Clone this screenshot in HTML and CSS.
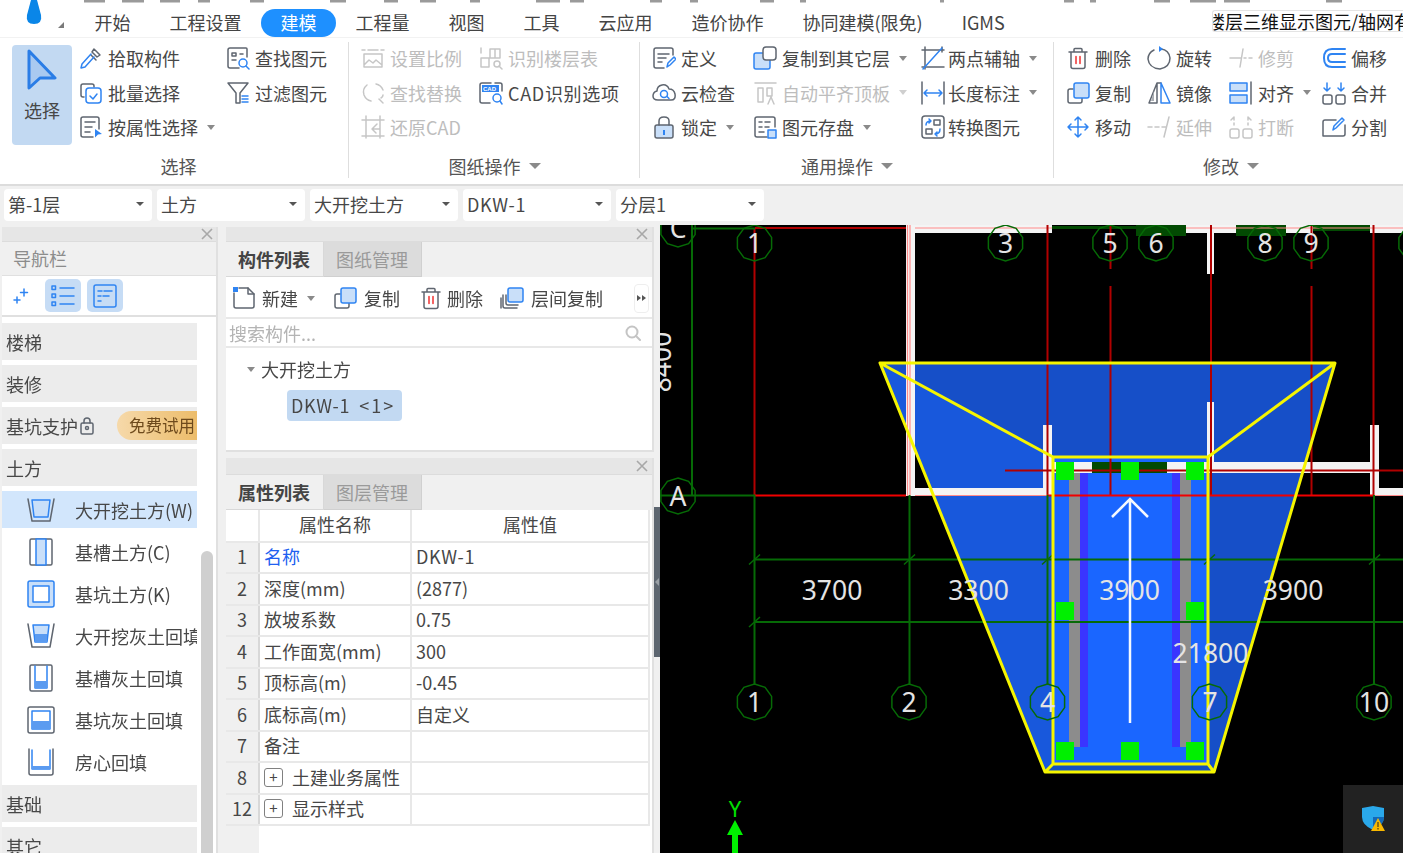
FILE: index.html
```html
<!DOCTYPE html>
<html lang="zh-CN">
<head>
<meta charset="utf-8">
<title>建模</title>
<link rel="stylesheet" href="styles.css">
</head>
<body>
<svg class="defs" width="0" height="0">
  <defs>
    <symbol id="trash" viewBox="0 0 24 24"><path class="g" d="M3 6h18M8 6V3.500q0-1 1-1h6q1 0 1 1V6M5 6v14.500q0 2 2 2h10q2 0 2-2V6"/><path class="r" d="M10 10.500v7M14 10.500v7"/></symbol>
    <symbol id="copy" viewBox="0 0 24 24"><path class="g" d="M7 8H4q-2 0-2 2v10q0 2 2 2h10q2 0 2-2v-3"/><rect class="bf" x="8" y="2" width="15" height="15" rx="2"/></symbol>
    <symbol id="oct" viewBox="-19 -19 38 38"><polygon class="octa" points="0,-18 10.600,-14.600 17.100,-5.600 17.100,5.600 10.600,14.600 0,18 -10.600,14.600 -17.100,5.600 -17.100,-5.600 -10.600,-14.600"/></symbol>
  </defs>
</svg>
<div class="app">
  <header class="menubar">
    <svg class="frags" width="1403" height="3" viewBox="0 0 1403 3"><path class="fragline" d="M84 1h21M122 1h22M160 1h20M198 1h12M250 1h14M330 1h16M384 1h14M420 1h16M470 1h10M536 1h24M570 1h14M650 1h12M690 1h8M760 1h14M800 1h6M940 1h4M1064 1h10M1090 1h6M1154 1h16M1190 1h26M1224 1h26M1326 1h16"/></svg>
    <svg class="brand" width="75" height="37" viewBox="0 0 75 37"><path class="drop" d="M31 0h6l4 15q1.500 9-7 9t-7-9z"/><path class="corner" d="M64 22v6h-6z"/></svg>
    <nav class="tabs">
      <span class="tab">开始</span><span class="tab">工程设置</span><span class="tab tab-on">建模</span><span class="tab">工程量</span><span class="tab">视图</span><span class="tab">工具</span><span class="tab">云应用</span><span class="tab">造价协作</span><span class="tab">协同建模(限免)</span><span class="tab">IGMS</span>
    </nav>
    <div class="combo3d">楼层三维显示图元/轴网有效</div>
  </header>

  <section class="ribbon">
    <div class="group g1">
      <div class="group-body">
        <div class="bigbtn">
          <svg width="32" height="42" viewBox="0 0 32 42"><path class="arrow" d="M3 3L29 30H14L3 40Z"/></svg>
          <span>选择</span>
        </div>
        <div class="grid cols1">
          <div class="rb"><svg class="ic" viewBox="0 0 24 24"><path class="g" d="M12 9l5 5M15 3l6 6-3 2-5-5z"/><path class="bs" d="M12 8L3 18l-1 4 4-1 9-10" /></svg><span>拾取构件</span></div>
          <div class="rb"><svg class="ic" viewBox="0 0 24 24"><path class="g" d="M5 16H4q-2 0-2-2V5q0-2 2-2h9q2 0 2 2v1"/><rect class="bs" x="7" y="7" width="15" height="15" rx="3"/><path class="bs" d="M11 15l3 3 4-5"/></svg><span>批量选择</span></div>
          <div class="rb"><svg class="ic" viewBox="0 0 24 24"><path class="g" d="M20 14V4q0-2-2-2H4Q2 2 2 4v16q0 2 2 2h10M6 7h10M6 12h7M6 17h5"/><path class="bsolid" d="M16 14l7 5-4 .5-3 3z"/></svg><span>按属性选择</span><i class="caret"></i></div>
          <div class="rb"><svg class="ic" viewBox="0 0 24 24"><path class="g" d="M21 11V3q0-1-1-1H4Q2 2 2 4v16q0 2 2 2h9M6 7h4v3H6zM6 14h4M14 8h3"/><circle class="bs" cx="17" cy="17" r="4"/><path class="bs" d="M20 20l3 3"/></svg><span>查找图元</span></div>
          <div class="rb"><svg class="ic" viewBox="0 0 24 24"><path class="g" d="M2 2h20l-8 10v10h-4V12z"/><path class="bs" d="M16 15h6M16 18h6M16 21h6"/></svg><span>过滤图元</span></div>
        </div>
      </div>
      <div class="group-label lbl-g1">选择</div>
    </div>

    <div class="group g2">
      <div class="group-body">
        <div class="grid cols2">
          <div class="rb off"><svg class="ic" viewBox="0 0 24 24"><path class="d" d="M1 4h3M20 4h3M7 4h10M3 8h18v13H3zM3 19l5-5 4 3 3-3 6 5"/></svg><span>设置比例</span></div>
          <div class="rb off"><svg class="ic" viewBox="0 0 24 24"><path class="d" d="M6 4Q1 8 3 14q2 5 7 6M15 3q5 1 7 6M22 14q0 2-2 3"/><path class="d" d="M18 18l4 4"/></svg><span>查找替换</span></div>
          <div class="rb off"><svg class="ic" viewBox="0 0 24 24"><path class="d" d="M1 5h22M1 21h22M5 1v22M19 1v22M16 9l-5 5h7M11 14l4 4"/></svg><span>还原CAD</span></div>
          <div class="rb off"><svg class="ic" viewBox="0 0 24 24"><path class="d" d="M2 2v5M2 12h8v9H2zM11 3h10v9H11zM16 3v9"/><circle class="d" cx="18" cy="18" r="3"/><path class="d" d="M20 20l3 3"/></svg><span>识别楼层表</span></div>
          <div class="rb"><svg class="ic" viewBox="0 0 24 24"><path class="g" d="M16 2h5q2 0 2 2v6M11 22H3q-2 0-2-2V4q0-2 2-2h9"/><path class="bsolid" d="M3 4h17v7H3z"/><text class="cadtxt" x="4" y="10">CAD</text><circle class="bs" cx="18" cy="17" r="4"/><path class="bs" d="M21 20l2 3"/></svg><span class="lat">CAD识别选项</span></div>
        </div>
      </div>
      <div class="group-label">图纸操作<i class="caret caret-lg"></i></div>
    </div>

    <div class="group g3">
      <div class="group-body">
        <div class="grid cols3">
          <div class="rb"><svg class="ic" viewBox="0 0 24 24"><path class="g" d="M21 9V4q0-2-2-2H4Q2 2 2 4v16q0 2 2 2h8M6 8h11M6 12h8M6 16h4"/><path class="bs" d="M15 21l1-4 6-6 2 2-6 6z"/></svg><span>定义</span></div>
          <div class="rb"><svg class="ic" viewBox="0 0 24 24"><rect class="bf" x="1" y="7" width="16" height="16" rx="2"/><rect class="gw" x="10" y="1" width="13" height="13" rx="3"/></svg><span>复制到其它层</span><i class="caret"></i></div>
          <div class="rb"><svg class="ic" viewBox="0 0 24 24"><path class="g" d="M4 1v22M1 4h22M21 1v5M1 21h22"/><path class="bs" d="M2 23L21 2"/></svg><span>两点辅轴</span><i class="caret"></i></div>
          <div class="rb"><svg class="ic" viewBox="0 0 24 24"><path class="g" d="M6 19h13q5 0 4-6-1-5-6-5-2-5-7-4-5 1-5 6-4 1-4 5 0 4 5 4"/><circle class="bs" cx="12" cy="13" r="3.500"/><path class="bs" d="M15 15.500l2 2"/></svg><span>云检查</span></div>
          <div class="rb off"><svg class="ic" viewBox="0 0 24 24"><path class="d" d="M2 2h21M5 7h5v14H5zM14 7h5v8h-5zM15 23l3-7 3 7"/></svg><span>自动平齐顶板</span><i class="caret caret-off"></i></div>
          <div class="rb"><svg class="ic" viewBox="0 0 24 24"><path class="g" d="M1 1v22M23 1v22"/><path class="bs" d="M3 12h18M6 9l-3 3 3 3M18 9l3 3-3 3"/></svg><span>长度标注</span><i class="caret"></i></div>
          <div class="rb"><svg class="ic" viewBox="0 0 24 24"><rect class="bfg" x="3" y="10" width="18" height="13" rx="2"/><path class="g" d="M7 10V6q0-4 5-4t5 4v4"/><path class="bsolid" d="M11 15h2v5h-2z"/></svg><span>锁定</span><i class="caret"></i></div>
          <div class="rb"><svg class="ic" viewBox="0 0 24 24"><path class="g" d="M22 12V4q0-2-2-2H4Q2 2 2 4v16q0 2 2 2h10M6 7h3M12 7h5M6 12h3M12 12h4M6 17h5"/><rect class="bf" x="15" y="15" width="8" height="8"/></svg><span>图元存盘</span><i class="caret"></i></div>
          <div class="rb"><svg class="ic" viewBox="0 0 24 24"><rect class="g" x="1" y="1" width="22" height="22" rx="3"/><rect class="g" x="13" y="5" width="6" height="5"/><rect class="g" x="5" y="14" width="6" height="5"/><path class="bs" d="M5 10q0-4 5-4M8 4l2 2-2 2M19 14q0 5-5 5M16 21l-2-2 2-2"/></svg><span>转换图元</span></div>
        </div>
      </div>
      <div class="group-label">通用操作<i class="caret caret-lg"></i></div>
    </div>

    <div class="group g4">
      <div class="group-body">
        <div class="grid cols4">
          <div class="rb"><svg class="ic"><use href="#trash"/></svg><span>删除</span></div>
          <div class="rb"><svg class="ic" viewBox="0 0 24 24"><path class="g" d="M14 3q8 1 9 9 0 9-10 11Q2 22 1 13q0-6 6-9"/><path class="bsolid" d="M12 0l4 3-4 3z"/></svg><span>旋转</span></div>
          <div class="rb off"><svg class="ic" viewBox="0 0 24 24"><path class="d" d="M1 12h11M15 12h2M20 12h3M14 3l-3 18"/></svg><span>修剪</span></div>
          <div class="rb"><svg class="ic" viewBox="0 0 24 24"><path class="bs2" d="M23 3H10Q2 3 2 12t8 9h13M23 8H10q-4 0-4 4t4 4h13"/></svg><span>偏移</span></div>
          <div class="rb"><svg class="ic"><use href="#copy"/></svg><span>复制</span></div>
          <div class="rb"><svg class="ic" viewBox="0 0 24 24"><path class="g" d="M10 2v20H2zM10 2h4"/><path class="grayfill" d="M7 10v10H4z"/><path class="bs" d="M14 2l9 20h-9z"/></svg><span>镜像</span></div>
          <div class="rb"><svg class="ic" viewBox="0 0 24 24"><rect class="bf" x="1" y="2" width="17" height="8"/><rect class="bf" x="1" y="14" width="17" height="8"/><path class="g" d="M22 1v22"/></svg><span>对齐</span><i class="caret"></i></div>
          <div class="rb"><svg class="ic" viewBox="0 0 24 24"><rect class="g" x="1" y="14" width="9" height="9" rx="2"/><rect class="g" x="14" y="14" width="9" height="9" rx="2"/><path class="bs" d="M5 2v8M2 7l3 3 3-3M19 2v8M16 7l3 3 3-3"/></svg><span>合并</span></div>
          <div class="rb"><svg class="ic" viewBox="0 0 24 24"><path class="bs" d="M12 2v20M2 12h20M9 5l3-3 3 3M9 19l3 3 3-3M5 9l-3 3 3 3M19 9l3 3-3 3"/></svg><span>移动</span></div>
          <div class="rb off"><svg class="ic" viewBox="0 0 24 24"><path class="d" d="M1 12h4M8 12h4M15 12h4M22 2l-5 20"/></svg><span>延伸</span></div>
          <div class="rb off"><svg class="ic" viewBox="0 0 24 24"><rect class="d" x="1" y="14" width="9" height="9" rx="2"/><rect class="d" x="14" y="14" width="9" height="9" rx="2"/><path class="d" d="M5 2v3M5 8v2M19 2v3M19 8v2M2 5l3-3M22 5l-3-3"/></svg><span>打断</span></div>
          <div class="rb"><svg class="ic" viewBox="0 0 24 24"><path class="g" d="M14 5H3Q1 5 1 7v14h20q2 0 2-2v-9"/><path class="bs" d="M11 15l1-4 8-8 2 2-8 8z"/></svg><span>分割</span></div>
        </div>
      </div>
      <div class="group-label lbl-g4">修改<i class="caret caret-lg"></i></div>
    </div>
  </section>

  <section class="selbar">
    <div class="sel"><span>第-1层</span><i class="caret caret-dark"></i></div>
    <div class="sel"><span>土方</span><i class="caret caret-dark"></i></div>
    <div class="sel"><span>大开挖土方</span><i class="caret caret-dark"></i></div>
    <div class="sel"><span class="lat">DKW-1</span><i class="caret caret-dark"></i></div>
    <div class="sel"><span>分层1</span><i class="caret caret-dark"></i></div>
  </section>

  <main class="workspace">
    <aside class="nav">
      <div class="strip"><svg class="x" viewBox="0 0 12 12"><path d="M1 1l10 10M11 1L1 11"/></svg></div>
      <div class="nav-title">导航栏</div>
      <div class="nav-tools">
        <svg class="spark" width="16" height="16" viewBox="0 0 16 16"><path class="bs" d="M11 1v7M7.500 4.500h7M4 9v6M1 12h6"/></svg>
        <div class="toolbtn"><svg width="24" height="24" viewBox="0 0 24 24"><path class="bs" d="M9 4h14M9 12h14M9 20h14"/><rect class="bs" x="1" y="2" width="3.500" height="3.500"/><rect class="bs" x="1" y="10" width="3.500" height="3.500"/><rect class="bs" x="1" y="18" width="3.500" height="3.500"/></svg></div>
        <div class="toolbtn"><svg width="24" height="24" viewBox="0 0 24 24"><rect class="bs" x="1" y="1" width="22" height="22" rx="2"/><path class="bs" d="M5 7h4M11 7h8M5 12h3M10 12h6M5 17h3"/></svg></div>
      </div>
      <div class="nav-body">
        <div class="nav-list">
          <div class="cat"><span>楼梯</span></div>
          <div class="cat"><span>装修</span></div>
          <div class="cat"><span>基坑支护</span><svg class="lock" width="14" height="18" viewBox="0 0 14 18"><rect class="g" x="1" y="6" width="12" height="11" rx="1.500"/><path class="g" d="M4 6V4q0-3 3-3t3 3v2"/><circle class="g" cx="7" cy="11" r="1.500"/></svg><span class="badge">免费试用</span></div>
          <div class="cat"><span>土方</span></div>
          <div class="sub sub-on"><svg class="subic" viewBox="0 0 30 30"><path class="g" d="M2 4l4 22h18l4-22"/><path class="bf" d="M6 5h18l-2 17H8z"/></svg><span>大开挖土方(W)</span></div>
          <div class="sub"><svg class="subic" viewBox="0 0 30 30"><rect class="g" x="4" y="2" width="22" height="26" rx="1.500"/><path class="bf" d="M10 2h10v26H10z"/></svg><span>基槽土方(C)</span></div>
          <div class="sub"><svg class="subic" viewBox="0 0 30 30"><rect class="bf" x="2" y="2" width="26" height="26" rx="2"/><rect class="whb" x="7" y="7" width="16" height="16"/></svg><span>基坑土方(K)</span></div>
          <div class="sub"><svg class="subic" viewBox="0 0 30 30"><path class="g" d="M2 3l4 23h18l4-23"/><path class="bf" d="M7 4h16l-2 17H9z"/><path class="dots" d="M9 13h12v8H9z"/></svg><span>大开挖灰土回填</span></div>
          <div class="sub"><svg class="subic" viewBox="0 0 30 30"><rect class="g" x="4" y="2" width="22" height="26" rx="1.500"/><path class="bs" d="M9 3v22h12V3"/><path class="dots" d="M9 18h12v7H9z"/></svg><span>基槽灰土回填</span></div>
          <div class="sub"><svg class="subic" viewBox="0 0 30 30"><rect class="g" x="2" y="2" width="26" height="26" rx="2"/><rect class="bs" x="6" y="6" width="18" height="18"/><path class="dots" d="M6 16h18v8H6z"/></svg><span>基坑灰土回填</span></div>
          <div class="sub"><svg class="subic" viewBox="0 0 30 30"><path class="g" d="M3 2v24q0 2 2 2h20q2 0 2-2V2"/><path class="bs" d="M6 3v19h18V3"/><path class="dots" d="M6 19h18v3H6z"/></svg><span>房心回填</span></div>
          <div class="cat"><span>基础</span></div>
          <div class="cat"><span>其它</span></div>
        </div>
        <div class="nav-scroll"><div class="nav-thumb"></div></div>
      </div>
    </aside>

    <div class="mid">
      <section class="panel panel-list">
        <div class="strip"><svg class="x" viewBox="0 0 12 12"><path d="M1 1l10 10M11 1L1 11"/></svg></div>
        <div class="panel-tabs"><div class="ptab ptab-on">构件列表</div><div class="ptab">图纸管理</div></div>
        <div class="ptools">
          <div class="pt pt-new"><svg class="ic" viewBox="0 0 24 24"><path class="g" d="M2 7v13q0 2 2 2h16q2 0 2-2V8l-6-6H7"/><path class="g" d="M16 2v6h6"/><path class="bsolid" d="M1 1h5v5H1z"/></svg><span>新建</span><i class="caret"></i></div>
          <div class="pt pt-copy"><svg class="ic"><use href="#copy"/></svg><span>复制</span></div>
          <div class="pt pt-del"><svg class="ic"><use href="#trash"/></svg><span>删除</span></div>
          <div class="pt"><svg class="ic" viewBox="0 0 24 24"><path class="g" d="M3 9v11q0 2 2 2h12M1 12v10"/><path class="g" d="M6 9v8q0 2 2 2h10"/><rect class="bf" x="8" y="2" width="15" height="14" rx="2"/></svg><span>层间复制</span></div>
          <div class="more"><span class="tri"></span><span class="tri"></span></div>
        </div>
        <div class="search"><span>搜索构件...</span><svg width="16" height="16" viewBox="0 0 16 16"><circle class="sch" cx="7" cy="7" r="5.500"/><path class="sch" d="M11 11l4 4"/></svg></div>
        <div class="tree">
          <div class="tree-root"><i class="caret"></i><span>大开挖土方</span></div>
          <div class="chip"><span class="lat">DKW-1</span><span class="chip-n">&lt;1&gt;</span></div>
        </div>
      </section>

      <section class="panel panel-attr">
        <div class="strip"><svg class="x" viewBox="0 0 12 12"><path d="M1 1l10 10M11 1L1 11"/></svg></div>
        <div class="panel-tabs"><div class="ptab ptab-on">属性列表</div><div class="ptab">图层管理</div></div>
        <div class="attr-body">
          <table class="attr">
            <colgroup><col class="c0"><col class="c1"><col class="c2"></colgroup>
            <thead><tr><th class="hd0"></th><th>属性名称</th><th>属性值</th></tr></thead>
            <tbody>
              <tr><td class="no">1</td><td class="key">名称</td><td class="lat">DKW-1</td></tr>
              <tr><td class="no">2</td><td>深度(mm)</td><td>(2877)</td></tr>
              <tr><td class="no">3</td><td>放坡系数</td><td>0.75</td></tr>
              <tr><td class="no">4</td><td>工作面宽(mm)</td><td>300</td></tr>
              <tr><td class="no">5</td><td>顶标高(m)</td><td>-0.45</td></tr>
              <tr><td class="no">6</td><td>底标高(m)</td><td>自定义</td></tr>
              <tr><td class="no">7</td><td>备注</td><td></td></tr>
              <tr><td class="no">8</td><td><span class="plus">+</span>土建业务属性</td><td></td></tr>
              <tr><td class="no">12</td><td><span class="plus">+</span>显示样式</td><td></td></tr>
            </tbody>
          </table>
          <div class="attr-rest"></div>
        </div>
      </section>
    </div>

    <div class="splitter"><div class="split-thumb"><i class="split-arrow"></i></div></div>

    <div class="canvas">
      <svg class="draw" width="743" height="628" viewBox="660 225 743 628">
        <!-- blue pit -->
        <polygon class="bl1" points="880,363 1335,363 1208,457 1053,457"/>
        <polygon class="bl2" points="880,363 1053,457 1053,764 1045,772"/>
        <polygon class="bl3" points="1335,363 1208,457 1208,764 1214,772"/>
        <polygon class="bl4" points="1045,772 1053,764 1208,764 1214,772"/>
        <rect class="bl5" x="1053" y="457" width="155" height="307"/>
        <!-- walls -->
        <g class="wall">
          <rect x="906" y="225" width="9" height="271"/>
          <rect x="915" y="225" width="137" height="8"/>
          <rect x="915" y="488" width="137" height="8"/>
          <rect x="1043" y="425" width="9" height="71"/>
          <rect x="1186" y="225" width="50" height="8"/>
          <rect x="1207" y="225" width="7" height="49"/>
          <rect x="1286" y="225" width="27" height="8"/>
          <rect x="1370" y="225" width="33" height="8"/>
          <rect x="1207" y="402" width="7" height="71"/>
          <rect x="1207" y="462" width="163" height="11"/>
          <rect x="1370" y="425" width="9" height="71"/>
          <rect x="1379" y="488" width="24" height="8"/>
          <rect x="1054" y="462" width="38" height="11"/>
          <rect x="1167" y="462" width="41" height="11"/>
        </g>
        <path class="dkgr" d="M1092 462h75v11h-75zM1136 225h50v11h-50zM1236 225h50v11h-50zM1313 225h57v6h-57zM1052 226h84v3h-84z"/>
        <path class="pink" d="M907.500 225V496M910 225V496M915 228H1052M1186 228H1403M915 495.500H1047M1373 495.500H1403"/>
        <!-- columns -->
        <rect class="gy" x="1069" y="473" width="11" height="274"/>
        <rect class="ind" x="1080" y="473" width="8" height="274"/>
        <rect class="ind" x="1172" y="473" width="8" height="274"/>
        <rect class="gy" x="1180" y="473" width="11" height="274"/>
        <!-- red axes -->
        <path class="rd" d="M754.500 228V495M755 228H906M1047.500 225V495M1110.500 225V269M1110.500 286V495M1211 225V495M1311.500 225V269M1311.500 286V495M1373.500 225V495M1005 470.500H1403"/>
        <path class="rb-line" d="M755 495.500H906M1047 495.500H1374"/>
        <!-- grid -->
        <path class="gl" d="M692 225V496M660 495.500H755M692 228.500H755M754.500 495V684M909.500 495V684M1047.500 495V684M1374 495V684M754 559.500H1403M754 622H1403"/>
        <path class="tick" d="M749 564.500l11-10M904 564.500l11-10M1042 564.500l11-10M1204 564.500l11-10M1369 564.500l11-10M749 627l11-10"/>
        <!-- outline -->
        <path class="yl" d="M880 363H1335L1214 772H1045ZM880 363L1053 457M1335 363L1208 457M1045 772L1053 764M1214 772L1208 764M1053 457H1208V764H1053Z"/>
        <!-- handles -->
        <path class="hnd" d="M1056 462h18v18h-18zM1121 462h18v18h-18zM1186 462h18v18h-18zM1056 602h18v18h-18zM1186 602h18v18h-18zM1056 742h18v18h-18zM1121 742h18v18h-18zM1186 742h18v18h-18z"/>
        <!-- direction arrow -->
        <path class="wa" d="M1130 723V499M1112 517L1130 499L1148 517"/>
        <!-- bubbles -->
        <use href="#oct" x="659" y="210" width="38" height="38"/>
        <use href="#oct" x="735.500" y="224" width="38" height="38"/>
        <use href="#oct" x="986.500" y="224" width="38" height="38"/>
        <use href="#oct" x="1091" y="224" width="38" height="38"/>
        <use href="#oct" x="1137" y="224" width="38" height="38"/>
        <use href="#oct" x="1246" y="224" width="38" height="38"/>
        <use href="#oct" x="1292" y="224" width="38" height="38"/>
        <use href="#oct" x="1397" y="224" width="38" height="38"/>
        <use href="#oct" x="659" y="477" width="38" height="38"/>
        <use href="#oct" x="735.500" y="683" width="38" height="38"/>
        <use href="#oct" x="890" y="683" width="38" height="38"/>
        <use href="#oct" x="1028.500" y="683" width="38" height="38"/>
        <use href="#oct" x="1190.500" y="683" width="38" height="38"/>
        <use href="#oct" x="1355" y="683" width="38" height="38"/>
        <!-- labels -->
        <g class="lb">
          <text x="678" y="238">C</text><text x="754.500" y="253">1</text><text x="1005.500" y="253">3</text><text x="1110" y="253">5</text><text x="1156" y="253">6</text><text x="1265" y="253">8</text><text x="1311" y="253">9</text>
          <text x="678" y="506">A</text>
          <text x="754.500" y="712">1</text><text x="909" y="712">2</text><text x="1047.500" y="712">4</text><text x="1210" y="712">7</text><text x="1374" y="712">10</text>
          <text x="832" y="600">3700</text><text x="978.500" y="600">3300</text><text x="1129.500" y="600">3900</text><text x="1293" y="600">3900</text><text x="1210.500" y="663">21800</text>
          <text transform="translate(671 362) rotate(-90)" x="0" y="0">8400</text>
        </g>
        <text class="ya" x="735" y="817">Y</text>
        <path class="yarrow" d="M735 820l8 15h-5v18h-6v-18h-5z"/>
      </svg>
      <div class="tray">
        <svg width="26" height="26" viewBox="0 0 26 26"><path class="sh1" d="M2 2l11-2 11 2v9q0 8-11 13Q2 19 2 11z"/><path class="sh2" d="M13 11h11q0 8-11 13z"/><path class="sh3" d="M18 12l7 13H11z"/><path class="sh4" d="M17.500 16h1v5h-1zM17.500 22h1v1.500h-1z"/></svg>
      </div>
    </div>
  </main>
</div>
</body>
</html>
```

FILE: styles.css
```css
* { box-sizing: border-box; }
html, body { margin: 0; height: 100%; }
body {
  background: #f0f0f0;
  color: #474747;
  font: 18px/24px "Noto Sans CJK SC", "Noto Sans", sans-serif;
  overflow: hidden;
}
.defs { display: block; height: 0; }
.app {
  width: 1403px;
  height: 853px;
  display: flex;
  flex-direction: column;
  overflow: hidden;
  filter: blur(0.35px);
}
.lat { letter-spacing: 0.7px; }

/* shared icon strokes */
.g, .gw, .bs, .bs2, .d, .r, .bf, .bfg, .whb, .sch { stroke-width: 1.5; fill: none; stroke-linejoin: round; stroke-linecap: round; }
.g, .gw { stroke: #5f6670; }
.gw { fill: #fff; }
.bs { stroke: #2f84f2; }
.bs2 { stroke: #2f84f2; stroke-width: 2; }
.d { stroke: #c6c6c6; }
.r { stroke: #f03030; }
.bf { stroke: #2f84f2; fill: #c9dff9; }
.bfg { stroke: #5f6670; fill: #c9dff9; }
.whb { stroke: #2f84f2; fill: #fff; }
.bsolid { fill: #2f84f2; }
.grayfill { fill: #a9adb3; }
.dots { fill: #5b9bf0; }
.sch { stroke: #c4c4c4; stroke-width: 2; }
.cadtxt { fill: #fff; font: 700 6px "Liberation Sans", sans-serif; }

.caret {
  display: inline-block;
  width: 0;
  height: 0;
  margin-left: 9px;
  border-style: solid;
  border-width: 5px 4px 0;
  border-color: #8a8a8a transparent transparent;
}
.caret-lg { border-width: 6px 6px 0; margin-left: 8px; }
.caret-off { border-top-color: #cfcfcf; }
.caret-dark { border-top-color: #555; border-width: 4px 4px 0; margin: 0; }

/* menu bar */
.menubar {
  position: relative;
  height: 37px;
  flex: none;
  display: flex;
  background: #fff;
}
.frags { position: absolute; left: 0; top: 0; }
.fragline { stroke: #9a9a9a; stroke-width: 3; }
.brand { flex: none; }
.drop { fill: #0a86e8; }
.corner { fill: #7a7a7a; }
.tabs { display: flex; align-items: stretch; padding-top: 9px; }
.tab { padding: 0 19.500px; height: 28px; line-height: 26px; white-space: nowrap; color: #444; }
.tab-on { background: #1e90ff; color: #fff; border-radius: 14px; }
.combo3d {
  margin: 10px 0 0 auto;
  width: 191px;
  height: 22px;
  line-height: 21px;
  background: #fff;
  border: 1px solid #e4e4e4;
  border-right: 0;
  border-radius: 3px 0 0 3px;
  color: #111;
  white-space: nowrap;
  overflow: hidden;
  text-indent: -6px;
}

/* ribbon */
.ribbon {
  height: 149px;
  flex: none;
  display: flex;
  background: #fff;
  border-top: 1px solid #f2f2f2;
  border-bottom: 2px solid #dcdcdc;
}
.group { display: flex; flex-direction: column; position: relative; }
.group + .group::before {
  content: "";
  position: absolute;
  left: -1px;
  top: 4px;
  bottom: 6px;
  width: 1px;
  background: #dedede;
}
.g1 { width: 349px; }
.g2 { width: 291px; }
.g3 { width: 414px; }
.g4 { width: 349px; }
.group-body { display: flex; padding: 3px 0 0 12px; height: 112px; }
.group-label { display: flex; align-items: center; justify-content: center; height: 34px; padding-bottom: 2px; color: #555; }
.lbl-g1 { padding-left: 8px; }
.lbl-g4 { padding-left: 5px; }
.bigbtn {
  width: 60px;
  height: 100px;
  margin: 4px 7px 0 0;
  background: #c2d9f2;
  border-radius: 4px;
  display: flex;
  flex-direction: column;
  align-items: center;
  padding-top: 3px;
  gap: 8px;
}
.arrow { fill: #a9c9f0; stroke: #2a7de6; stroke-width: 3; stroke-linejoin: round; }
.grid { display: grid; grid-auto-rows: 34.500px; }
.cols1 { grid-template-columns: 147px 120px; grid-auto-flow: column; grid-template-rows: repeat(3, 34.500px); }
.cols2 { grid-template-columns: 118px 150px; grid-auto-flow: column; grid-template-rows: repeat(3, 34.500px); }
.cols3 { grid-template-columns: 101px 168px 130px; }
.cols3 .rb:nth-child(3n) .ic { margin-right: 3px; }
.cols4 { grid-template-columns: 81px 82px 93px 70px; }
.rb { display: flex; align-items: center; white-space: nowrap; }
.ic { width: 24px; height: 24px; flex: none; margin-right: 5px; }
.off { color: #bdbdbd; }

/* selector bar */
.selbar {
  height: 39px;
  flex: none;
  display: flex;
  gap: 5px;
  padding: 3px 4px 0;
  background: #f0f0f0;
}
.sel {
  width: 148px;
  height: 32px;
  padding: 0 8px 2px 4px;
  display: flex;
  align-items: center;
  justify-content: space-between;
  background: #fff;
  border-radius: 4px;
}

/* workspace */
.workspace { flex: 1; display: flex; min-height: 0; padding-top: 0; }
.strip {
  height: 15px;
  flex: none;
  display: flex;
  justify-content: flex-end;
  align-items: center;
  padding-right: 4px;
  background: #e6e6e6;
  border-bottom: 1px solid #dcdcdc;
}
.nav .strip { padding-right: 3px; }
.panel-attr .strip { height: 17px; }
.x { width: 12px; height: 12px; fill: none; stroke: #a8a8a8; stroke-width: 1.600; }

.nav {
  width: 216px;
  margin: 2px 8px 0 2px;
  flex: none;
  display: flex;
  flex-direction: column;
  background: #fff;
  border-right: 2px solid #e0e0e0;
}
.nav-title { height: 34px; flex: none; line-height: 32px; padding-left: 11px; background: #f0f0f0; color: #8c8c8c; border-bottom: 1px solid #e0e0e0; }
.nav-tools { height: 41px; flex: none; display: flex; align-items: center; padding-left: 11px; gap: 6px; border-bottom: 2px solid #e0e0e0; }
.spark { margin-right: 10px; }
.toolbtn { width: 36px; height: 33px; display: flex; align-items: center; justify-content: center; background: #c6dcf5; border-radius: 5px; }
.nav-body { flex: 1; display: flex; min-height: 0; overflow: hidden; }
.nav-list { width: 195px; flex: none; padding-top: 6px; overflow: hidden; }
.cat { height: 37px; margin-bottom: 5px; padding: 0 0 0 4px; background: #ececec; white-space: nowrap; display: flex; align-items: center; }
.lock { margin-left: 2px; }
.badge {
  margin: 0 0 0 auto;
  width: 80px;
  height: 29px;
  padding-left: 12px;
  line-height: 29px;
  font-size: 16.500px;
  color: #6e4a1c;
  background: linear-gradient(90deg, #f6d9aa, #ecbc6a);
  border-radius: 15px 0 0 15px;
  white-space: nowrap;
  overflow: hidden;
}
.sub { height: 37px; margin-bottom: 5px; display: flex; align-items: center; padding-left: 24px; white-space: nowrap; overflow: hidden; }
.sub-on { background: #d2e6fc; }
.subic { width: 30px; height: 30px; flex: none; margin-right: 19px; }
.nav-scroll { flex: 1; padding: 234px 3px 0 4px; }
.nav-thumb { height: 320px; background: #cfcfcf; border-radius: 6px; width: 12px; }

.mid { width: 428px; flex: none; margin-top: 2px; display: flex; flex-direction: column; gap: 6px; }
.panel { display: flex; flex-direction: column; background: #fff; border: solid #e0e0e0; border-width: 0 2px 2px 0; }
.panel-list { height: 225px; flex: none; }
.panel-attr { flex: 1; min-height: 0; border-bottom: 0; }
.panel-tabs { height: 35px; flex: none; display: flex; background: #f0f0f0; }
.ptab { width: 98px; height: 35px; line-height: 34px; padding-left: 12px; color: #9a9a9a; background: #dcdcdc; border: 1px solid #d0d0d0; border-width: 0 1px 1px 0; }
.ptab-on { font-weight: 700; color: #444; background: #f0f0f0; border-color: #d8d8d8; }
.ptools { height: 42px; flex: none; display: flex; align-items: center; padding: 2px 0 0 6px; border-bottom: 2px solid #e8e8e8; }
.pt { display: flex; align-items: center; }
.pt .ic { margin-right: 7px; }
.pt-new { width: 101px; }
.pt-new .ic { margin-right: 6px; }
.pt-copy { width: 86px; }
.pt-del { width: 81px; }
.pt-del .ic { margin-right: 4px; }
.more { margin-left: auto; margin-right: 3px; width: 15px; height: 29px; display: flex; align-items: center; justify-content: center; border: 1px solid #eee; border-radius: 4px; gap: 1px; }
.tri { width: 0; height: 0; border-style: solid; border-width: 3.500px 0 3.500px 4px; border-color: transparent transparent transparent #555; }
.search { height: 29px; flex: none; display: flex; align-items: center; justify-content: space-between; padding: 0 11px 0 3px; color: #b4b4b4; border-bottom: 2px solid #e8e8e8; }
.tree { flex: 1; padding-top: 8px; }
.tree-root { display: flex; align-items: center; padding: 0 0 2px 21px; height: 28px; color: #474747; }
.tree-root .caret { margin: 0 6px 0 0; }
.chip { width: 115px; height: 31px; margin: 6px 0 0 61px; padding-left: 4px; line-height: 31px; background: #c2d9f2; border-radius: 4px; white-space: nowrap; }
.chip-n { margin-left: 9px; letter-spacing: 2px; }

.attr-body { position: relative; flex: 1; min-height: 0; overflow: hidden; }
.attr { width: 423px; table-layout: fixed; border-collapse: collapse; background: #fff; }
.c0 { width: 33px; }
.c1 { width: 152px; }
.c2 { width: 238px; }
.attr th, .attr td {
  height: 31.500px;
  padding: 0 0 2px 4px;
  font-weight: 400;
  text-align: left;
  white-space: nowrap;
  border-bottom: 2px solid #e8e8e8;
  border-right: 2px solid #e8e8e8;
}
.attr th { text-align: center; padding: 0 0 2px; }
.attr th.hd0 { background: #fff; }
.attr td.no { padding: 0 0 2px; text-align: center; background: #f0f0f0; border-right: 2px solid #d8d8d8; }
.key { color: #2060f0; }
.plus { display: inline-block; width: 19px; height: 19px; margin-right: 9px; line-height: 16px; text-align: center; border: 1px solid #808080; border-radius: 3px; font-size: 15px; vertical-align: 2px; }
.attr-rest { height: 60px; width: 33px; background: #f0f0f0; }

.splitter { width: 6px; flex: none; padding-top: 282px; }
.split-thumb { height: 150px; background: #5d6670; display: flex; align-items: center; justify-content: flex-end; }
.split-arrow { width: 0; height: 0; border-style: solid; border-width: 4px 4px 4px 0; border-color: transparent #9aa0a6 transparent transparent; margin-right: 1px; }

/* drawing */
.canvas { position: relative; flex: 1; min-width: 0; background: #000; overflow: hidden; }
.draw { display: block; }
.gl { stroke: #066a06; stroke-width: 2; fill: none; }
.tick { stroke: #066a06; stroke-width: 1.500; fill: none; }
.octa { fill: none; stroke: #066a06; stroke-width: 1.500; }
.bl1 { fill: #164fc8; }
.bl2 { fill: #1858dc; }
.bl3 { fill: #164fc8; }
.bl4 { fill: #1450c0; }
.bl5 { fill: #1a66ff; }
.wall { fill: #f4f4f4; }
.dkgr { fill: #024a02; }
.pink { stroke: #ff8a8a; stroke-width: 1.200; fill: none; }
.gy { fill: #8c8c8c; }
.ind { fill: #3a35ff; }
.rd { stroke: #b00000; stroke-width: 2; fill: none; }
.rb-line { stroke: #f00000; stroke-width: 2; fill: none; }
.yl { stroke: #f5f500; stroke-width: 3; fill: none; stroke-linejoin: round; }
.hnd { fill: #00f000; }
.wa { stroke: #f4f8ff; stroke-width: 2.500; fill: none; }
.lb text { fill: #e4e4e4; font: 26.500px "Noto Sans", sans-serif; text-anchor: middle; }
.ya { fill: #00e000; font: 22px "Noto Sans", sans-serif; text-anchor: middle; }
.yarrow { fill: #00f000; }
.tray {
  position: absolute;
  right: 0;
  bottom: 0;
  width: 60px;
  height: 68px;
  background: #222;
  display: flex;
  align-items: center;
  justify-content: center;
}
.sh1 { fill: #2aa8ea; }
.sh2 { fill: #1268b8; }
.sh3 { fill: #f8b800; }
.sh4 { fill: #222; }
```
